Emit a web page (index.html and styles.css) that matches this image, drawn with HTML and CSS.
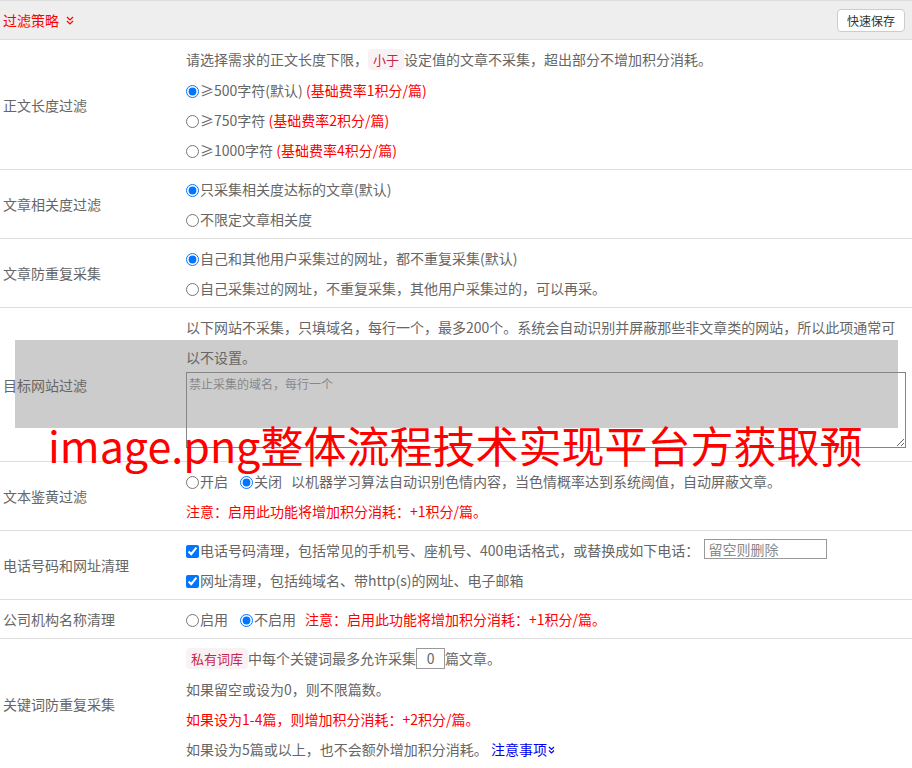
FILE: index.html
```html
<!DOCTYPE html>
<html lang="zh-CN">
<head>
<meta charset="utf-8">
<title>过滤策略</title>
<link rel="stylesheet" href="styles.css">
</head>
<body>
<div class="panel">
  <div class="head">
    <div class="title">过滤策略<svg class="chev" width="8" height="9" viewBox="0 0 8 9"><path d="M1 1l3 3 3-3M1 5l3 3 3-3" fill="none" stroke="#f00" stroke-width="1.2"/></svg></div>
    <button class="btn" type="button">快速保存</button>
  </div>

  <div class="row">
    <div class="label">正文长度过滤</div>
    <div class="content">
      <div>请选择需求的正文长度下限，<code class="tag">小于</code>设定值的文章不采集，超出部分不增加积分消耗。</div>
      <div><label><input type="radio" name="len" checked>≥500字符(默认)</label> <span class="red">(基础费率1积分/篇)</span></div>
      <div><label><input type="radio" name="len">≥750字符</label> <span class="red">(基础费率2积分/篇)</span></div>
      <div><label><input type="radio" name="len">≥1000字符</label> <span class="red">(基础费率4积分/篇)</span></div>
    </div>
  </div>

  <div class="row">
    <div class="label">文章相关度过滤</div>
    <div class="content">
      <div><label><input type="radio" name="rel" checked>只采集相关度达标的文章(默认)</label></div>
      <div><label><input type="radio" name="rel">不限定文章相关度</label></div>
    </div>
  </div>

  <div class="row">
    <div class="label">文章防重复采集</div>
    <div class="content">
      <div><label><input type="radio" name="dup" checked>自己和其他用户采集过的网址，都不重复采集(默认)</label></div>
      <div><label><input type="radio" name="dup">自己采集过的网址，不重复采集，其他用户采集过的，可以再采。</label></div>
    </div>
  </div>

  <div class="row">
    <div class="label">目标网站过滤</div>
    <div class="content">
      <div>以下网站不采集，只填域名，每行一个，最多200个。系统会自动识别并屏蔽那些非文章类的网站，所以此项通常可以不设置。</div>
      <div><textarea class="area" placeholder="禁止采集的域名，每行一个"></textarea></div>
    </div>
  </div>

  <div class="row">
    <div class="label">文本鉴黄过滤</div>
    <div class="content">
      <div><label class="gap"><input type="radio" name="porn">开启</label><label><input type="radio" name="porn" checked>关闭</label><span class="desc">以机器学习算法自动识别色情内容，当色情概率达到系统阈值，自动屏蔽文章。</span></div>
      <div class="red">注意：启用此功能将增加积分消耗：+1积分/篇。</div>
    </div>
  </div>

  <div class="row">
    <div class="label">电话号码和网址清理</div>
    <div class="content">
      <div><label><input type="checkbox" checked>电话号码清理，包括常见的手机号、座机号、400电话格式，或替换成如下电话：</label> <input class="phone" type="text" placeholder="留空则删除"></div>
      <div><label><input type="checkbox" checked>网址清理，包括纯域名、带http(s)的网址、电子邮箱</label></div>
    </div>
  </div>

  <div class="row">
    <div class="label">公司机构名称清理</div>
    <div class="content">
      <div><label class="gap"><input type="radio" name="org">启用</label><label><input type="radio" name="org" checked>不启用</label><span class="desc red">注意：启用此功能将增加积分消耗：+1积分/篇。</span></div>
    </div>
  </div>

  <div class="row">
    <div class="label">关键词防重复采集</div>
    <div class="content">
      <div><code class="tag">私有词库</code>中每个关键词最多允许采集<input class="num" type="text" value="0">篇文章。</div>
      <div>如果留空或设为0，则不限篇数。</div>
      <div class="red">如果设为1-4篇，则增加积分消耗：+2积分/篇。</div>
      <div>如果设为5篇或以上，也不会额外增加积分消耗。 <a class="link" href="#">注意事项<svg width="7" height="8" viewBox="0 0 7 8"><path d="M1 1l2.5 2.5L6 1M1 4.5L3.5 7 6 4.5" fill="none" stroke="#00e" stroke-width="1.1"/></svg></a></div>
    </div>
  </div>

  <div class="shade"></div>
  <div class="alt">image.png整体流程技术实现平台方获取预</div>
</div>
</body>
</html>
```

FILE: styles.css
```css
* { box-sizing: border-box; }

body {
  margin: 0;
  background: #fff;
  color: #666;
  font-family: "Noto Sans CJK SC", "Noto Sans", sans-serif;
  font-size: 14px;
}

.panel { position: relative; }

.head {
  display: flex;
  align-items: center;
  justify-content: space-between;
  height: 40px;
  padding: 0 7px 0 3px;
  background: #eee;
  border-top: 1px solid #ddd;
  border-bottom: 1px solid #ddd;
}

.title {
  display: flex;
  align-items: center;
  gap: 7px;
  color: #f00;
}

.btn {
  width: 68px;
  height: 23px;
  padding: 0;
  background: #fff;
  border: 1px solid #ccc;
  border-radius: 4px;
  color: #333;
  font-family: "Noto Sans CJK SC", sans-serif;
  font-size: 12px;
}

.row {
  display: grid;
  grid-template-columns: 186px 1fr;
  border-bottom: 1px solid #ddd;
}

.label {
  display: flex;
  align-items: center;
  padding-left: 3px;
}

.content {
  padding: 4px 6px 4px 0;
  line-height: 30px;
}

.content input[type="radio"],
.content input[type="checkbox"] {
  width: 13px;
  height: 13px;
  margin: 0 1px 0 0;
  vertical-align: -2px;
}

.red { color: #f00; }

.gap { margin-right: 12px; }

.desc { margin-left: 9px; }

.tag {
  padding: 1px 5px;
  border-radius: 4px;
  background: #f9f2f4;
  color: #c7254e;
  font-family: "Noto Sans CJK SC", sans-serif;
  font-size: 13px;
}

.area {
  display: inline-block;
  width: 720px;
  height: 76px;
  padding: 2px;
  margin: 0;
  vertical-align: baseline;
  background: transparent;
  border: 1px solid #858585;
  font-family: "Noto Sans CJK SC", sans-serif;
  font-size: 12px;
  line-height: 1.45;
  color: #333;
}

.area::placeholder { color: #888; }

.phone {
  width: 123px;
  height: 20px;
  padding: 0 3px;
  margin: 0 0 0 2px;
  border: 1px solid #999;
  font-family: "Noto Sans CJK SC", sans-serif;
  font-size: 14px;
  vertical-align: 1px;
}

.phone::placeholder { color: #888; }

.num {
  width: 29px;
  height: 21px;
  padding: 0;
  margin: 0;
  border: 1px solid #999;
  text-align: center;
  font-family: "Noto Sans CJK SC", sans-serif;
  font-size: 14px;
  color: #666;
  vertical-align: 0;
}

.link {
  color: #00e;
  text-decoration: none;
}

.link svg { margin-left: 1px; vertical-align: 1px; }

.shade {
  position: absolute;
  left: 15px;
  top: 340px;
  width: 883px;
  height: 88px;
  background: #ccc;
  z-index: -1;
}

.alt {
  position: absolute;
  left: 48px;
  top: 423px;
  color: #f00;
  font-size: 43px;
  line-height: 43px;
  white-space: nowrap;
  z-index: 2;
}
```
